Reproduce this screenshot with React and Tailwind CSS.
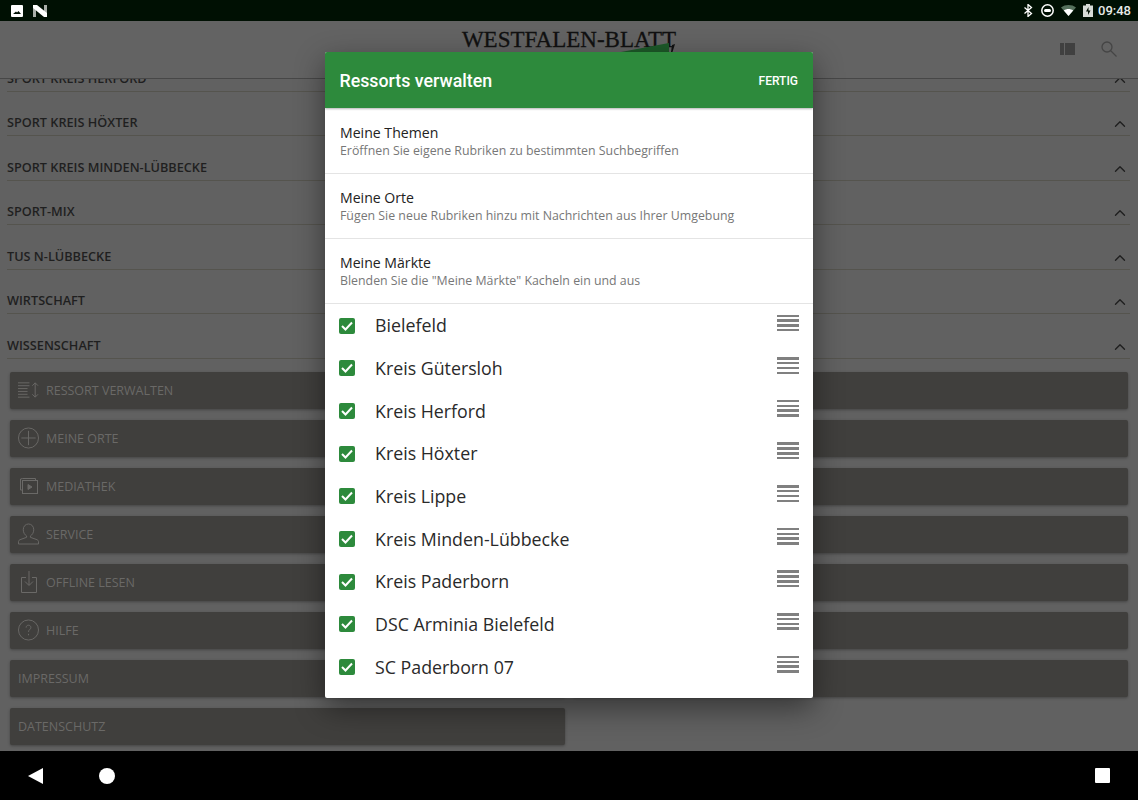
import { ChevronUp } from "lucide-react";

const sections = [
  "Sport Kreis Herford",
  "Sport Kreis Höxter",
  "Sport Kreis Minden-Lübbecke",
  "Sport-Mix",
  "TuS N-Lübbecke",
  "Wirtschaft",
  "Wissenschaft",
];

const topics = [
  { title: "Meine Themen", text: "Eröffnen Sie eigene Rubriken zu bestimmten Suchbegriffen" },
  { title: "Meine Orte", text: "Fügen Sie neue Rubriken hinzu mit Nachrichten aus Ihrer Umgebung" },
  { title: "Meine Märkte", text: 'Blenden Sie die "Meine Märkte" Kacheln ein und aus' },
];

const regions = [
  "Bielefeld",
  "Kreis Gütersloh",
  "Kreis Herford",
  "Kreis Höxter",
  "Kreis Lippe",
  "Kreis Minden-Lübbecke",
  "Kreis Paderborn",
  "DSC Arminia Bielefeld",
  "SC Paderborn 07",
  "",
];

const ManageIcon = () => (
  <svg width="22" height="16" viewBox="0 0 22 16" fill="none" stroke="currentColor" strokeWidth="1">
    <path d="M0 .5h12M0 3.500h12M0 6.500h10M0 9.500h10M0 12.500h10M0 15.500h12" />
    <path d="M18 .5v15M15 3.500l3-3 3 3M15 12.500l3 3 3-3" />
  </svg>
);

const PlusIcon = () => (
  <svg width="22" height="22" viewBox="0 0 22 22" fill="none" stroke="currentColor" strokeWidth="1">
    <circle cx="11" cy="11" r="10.5" />
    <path d="M11 3.500v15M3.500 11h15" />
  </svg>
);

const MediaIcon = () => (
  <svg width="18" height="16" viewBox="0 0 18 16" fill="none" stroke="currentColor" strokeWidth="1">
    <path d="M15.500 2.500v-2h-13l-2 .5v11h2" />
    <rect x="2.500" y="2.500" width="15" height="13" />
    <path d="M8 6.500l4 2.500-4 2.500z" fill="currentColor" />
  </svg>
);

const PersonIcon = () => (
  <svg width="22" height="22" viewBox="0 0 22 22" fill="none" stroke="currentColor" strokeWidth="1">
    <path d="M11 .5c3.200 0 5.500 2.600 5.500 6 0 3-1.600 5.500-3.500 6.500v1.500l7 2.500c1 .4 1.500 1.200 1.500 2v2.500h-21V19c0-.8.5-1.600 1.500-2l7-2.500V13c-1.900-1-3.500-3.500-3.500-6.500 0-3.400 2.300-6 5.500-6z" />
  </svg>
);

const DownloadIcon = () => (
  <svg width="16" height="22" viewBox="0 0 16 22" fill="none" stroke="currentColor" strokeWidth="1">
    <path d="M5 6.500H.5v15h15v-15H11" />
    <path d="M8 0v14M4 10.500l4 4 4-4" />
  </svg>
);

const HelpIcon = () => (
  <svg width="22" height="22" viewBox="0 0 22 22" fill="none" stroke="currentColor" strokeWidth="1">
    <circle cx="11" cy="11" r="10.500" />
    <path d="M8.500 8.500c0-1.500 1-2.500 2.500-2.500s2.500 1 2.500 2.300c0 2.200-2.500 2.200-2.500 4.700M11 15v1.500" />
  </svg>
);

const NavCard = ({ icon, label }) => (
  <div className="flex h-[37px] items-center rounded-[2px] bg-[#403f3d] pl-2 text-[#6a6967] shadow-[0_1px_3px_rgba(0,0,0,0.3)]">
    {icon && <span className="mr-[7px] flex w-[21px] justify-center">{icon}</span>}
    <span className="pt-[2px] text-[12.500px]">{label}</span>
  </div>
);

const Blank = () => <div className="h-[37px] rounded-[2px] bg-[#403f3d] shadow-[0_1px_3px_rgba(0,0,0,0.3)]" />;

const Handle = () => (
  <div className="flex w-[22px] flex-col gap-[2.300px] pt-[10px]">
    <div className="h-[2.500px] bg-[#808080]" />
    <div className="h-[2.500px] bg-[#808080]" />
    <div className="h-[2.500px] bg-[#808080]" />
    <div className="h-[2.500px] bg-[#808080]" />
  </div>
);

const Dialog = () => (
  <div className="absolute left-[325px] top-[52px] flex h-[646px] w-[488px] flex-col overflow-hidden rounded-[2px] bg-white shadow-[0_10px_30px_rgba(0,0,0,0.45)]">
    <div className="flex h-[56px] shrink-0 items-center justify-between bg-[#2d8a3c] pl-[14.500px] pr-[15px] pt-[2px] font-['Roboto',sans-serif] font-medium text-white shadow-[0_1px_2px_rgba(0,0,0,0.3)]">
      <span className="text-[17.800px]">Ressorts verwalten</span>
      <span className="text-[12px]">FERTIG</span>
    </div>
    <div className="shrink-0 pt-px">
      {topics.map((t) => (
        <div key={t.title} className="flex h-[65px] flex-col justify-center border-b border-[#e4e4e4] pl-[15px] pt-px">
          <p className="text-[14.100px] leading-[18px] text-[#222]">{t.title}</p>
          <p className="text-[12.350px] leading-[17px] text-[#777]">{t.text}</p>
        </div>
      ))}
    </div>
    <div className="min-h-0 flex-1 overflow-hidden pt-[0.500px]">
      {regions.map((name, i) => (
        <div key={i} className="flex h-[42.670px] pl-[14px] pr-[14px]">
          <div className="flex h-full flex-1 items-center">
            {name && (
              <>
                <span className="mr-[20px] flex size-4 items-center justify-center rounded-[2px] bg-[#2d8a3c]">
                  <svg width="12" height="10" viewBox="0 0 12 10" fill="none" stroke="white" strokeWidth="2">
                    <path d="M1 5l3.500 3.500L11 1.500" />
                  </svg>
                </span>
                <span className="text-[17.800px] text-[#2a2a2a]">{name}</span>
              </>
            )}
          </div>
          <Handle />
        </div>
      ))}
    </div>
  </div>
);

export default function App() {
  return (
    <div className="relative flex h-[800px] w-[1138px] flex-col overflow-hidden bg-[#616161] font-['Open_Sans',sans-serif]">
      <div className="flex h-[21px] shrink-0 items-center bg-[#001003] pl-[11px] pr-[7px] text-white">
        <svg width="12" height="12" viewBox="0 0 12 12" className="mr-[10px]">
          <path fillRule="evenodd" fill="white" d="M1 0h10a1 1 0 0 1 1 1v10a1 1 0 0 1-1 1H1a1 1 0 0 1-1-1V1a1 1 0 0 1 1-1zM2 9h8L7.500 6 6 7.500 5 6.500z" />
        </svg>
        <svg width="14" height="12" viewBox="0 0 14 12">
          <path fill="#a9aea9" d="M0 0h3v12H0zM11 0h3v12h-3z" />
          <path fill="white" d="M0 0h4l10 8v4h-3L0 3z" />
        </svg>
        <div className="flex-1" />
        <svg width="9" height="13" viewBox="0 0 9 13" fill="none" stroke="white" strokeWidth="1.300" className="mr-[8px]">
          <path d="M0.500 3.500l7 6-3.500 3v-12l3.500 3-7 6" />
        </svg>
        <svg width="13" height="13" viewBox="0 0 13 13" className="mr-[7px]">
          <circle cx="6.500" cy="6.500" r="5.700" fill="none" stroke="white" strokeWidth="1.500" />
          <rect x="3" y="5" width="7" height="3" rx="1.500" fill="white" />
        </svg>
        <svg width="15" height="11" viewBox="0 0 15 11" className="mr-[7px]">
          <path fill="#55705c" d="M0 2.500C4 -.8 11 -.8 15 2.500L7.500 11z" />
          <path fill="white" d="M2.800 5.500c2.700-2 6.700-2 9.400 0L7.500 11z" />
        </svg>
        <svg width="10" height="13" viewBox="0 0 10 13" className="mr-[5px]">
          <path fill="#d8dcd8" d="M3 0h4v1.500h3V13H0V1.500h3z" />
          <path fill="#001003" d="M5.500 3L3 7.500h2V11l2.500-4.500h-2z" />
        </svg>
        <span className="font-['Roboto',sans-serif] text-[13px] font-medium text-[#e8ebe8]">09:48</span>
      </div>

      <div className="flex h-[58px] shrink-0 items-start border-b border-[#474747] bg-[#636363]">
        <div className="flex-1 pl-[21px]" />
        <div className="relative pt-[6px] font-['Liberation_Serif',serif] text-[23px] leading-[26px] text-[#111] [-webkit-text-stroke:0.3px_#111]">
          WESTFALEN-BLATT
          <svg width="55" height="10" viewBox="0 0 55 10" className="absolute right-0 top-[22px]">
            <path fill="#1d5a29" d="M0 9L48 0v9z" />
            <path fill="#111" d="M51 2l3-1-2.500 8h-1.500z" />
          </svg>
        </div>
        <div className="flex flex-1 items-center justify-end gap-[26px] pr-[21px] pt-[20px]">
          <svg width="15" height="12" viewBox="0 0 15 12">
            <path fill="#404040" d="M0 0h4v12H0zM5 0h10v12H5z" />
          </svg>
          <svg width="16" height="16" viewBox="0 0 16 16" fill="none" stroke="#454545" strokeWidth="1.300">
            <circle cx="6" cy="6" r="5" />
            <path d="M9.500 9.500L15.500 15.500" />
          </svg>
        </div>
      </div>

      <main className="min-h-0 flex-1 overflow-hidden">
        <div className="-mt-[31.400px] ml-[7px] mr-2">
          {sections.map((s) => (
            <div key={s} className="flex h-[44.430px] items-end justify-between border-b border-[#55544e] pb-[3px] text-[#1f1f1f]">
              <span className="text-[12.700px] font-semibold uppercase">{s}</span>
              <ChevronUp size={18} strokeWidth={1.800} className="-mb-[1px] mr-[1px]" />
            </div>
          ))}
        </div>
        <div className="ml-[10px] mr-[10px] mt-[13px] grid grid-cols-2 gap-x-2 gap-y-[11px]">
          <NavCard icon={<ManageIcon />} label="RESSORT VERWALTEN" />
          <Blank />
          <NavCard icon={<PlusIcon />} label="MEINE ORTE" />
          <Blank />
          <NavCard icon={<MediaIcon />} label="MEDIATHEK" />
          <Blank />
          <NavCard icon={<PersonIcon />} label="SERVICE" />
          <Blank />
          <NavCard icon={<DownloadIcon />} label="OFFLINE LESEN" />
          <Blank />
          <NavCard icon={<HelpIcon />} label="HILFE" />
          <Blank />
          <NavCard label="IMPRESSUM" />
          <Blank />
          <NavCard label="DATENSCHUTZ" />
        </div>
      </main>

      <div className="flex h-[49px] shrink-0 items-center bg-black pl-[28px] pr-[28px]">
        <svg width="15" height="16" viewBox="0 0 15 16">
          <path fill="white" d="M15 0v16L0 8z" />
        </svg>
        <span className="ml-[56px] size-4 rounded-full bg-white" />
        <div className="flex-1" />
        <span className="size-[15px] rounded-[1px] bg-white" />
      </div>

      <Dialog />
    </div>
  );
}
